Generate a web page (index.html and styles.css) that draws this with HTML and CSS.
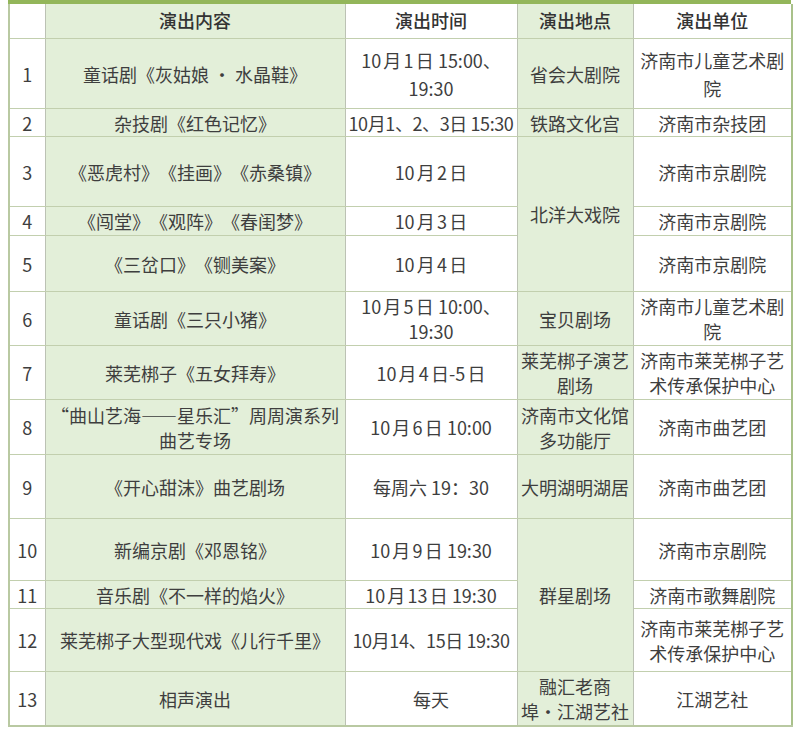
FILE: index.html
```html
<!DOCTYPE html>
<html lang="zh-CN">
<head>
<meta charset="utf-8">
<title>演出安排</title>
<link rel="stylesheet" href="styles.css">
</head>
<body>
<div class="sheet">
  <div class="band"></div>
  <table class="schedule">
    <colgroup>
      <col class="c-no">
      <col class="c-content">
      <col class="c-time">
      <col class="c-venue">
      <col class="c-unit">
    </colgroup>
    <thead>
      <tr class="h-head">
        <th class="no"></th>
        <th class="green">演出内容</th>
        <th>演出时间</th>
        <th class="green">演出地点</th>
        <th>演出单位</th>
      </tr>
    </thead>
    <tbody>
      <tr class="h70">
        <td class="no">1</td>
        <td class="green">童话剧《灰姑娘 · 水晶鞋》</td>
        <td class="two">10月1日 15:00、<br>19:30</td>
        <td class="green">省会大剧院</td>
        <td class="two">济南市儿童艺术剧<br>院</td>
      </tr>
      <tr class="h28">
        <td class="no">2</td>
        <td class="green">杂技剧《红色记忆》</td>
        <td class="tight">10月1、2、3日 15:30</td>
        <td class="green">铁路文化宫</td>
        <td>济南市杂技团</td>
      </tr>
      <tr class="h70">
        <td class="no">3</td>
        <td class="green">《恶虎村》《挂画》《赤桑镇》</td>
        <td>10月2日</td>
        <td class="green" rowspan="3">北洋大戏院</td>
        <td>济南市京剧院</td>
      </tr>
      <tr class="h29">
        <td class="no">4</td>
        <td class="green">《闯堂》《观阵》《春闺梦》</td>
        <td>10月3日</td>
        <td>济南市京剧院</td>
      </tr>
      <tr class="h56">
        <td class="no">5</td>
        <td class="green">《三岔口》《铡美案》</td>
        <td>10月4日</td>
        <td>济南市京剧院</td>
      </tr>
      <tr class="h54">
        <td class="no">6</td>
        <td class="green">童话剧《三只小猪》</td>
        <td>10月5日 10:00、<br>19:30</td>
        <td class="green">宝贝剧场</td>
        <td>济南市儿童艺术剧<br>院</td>
      </tr>
      <tr class="h54">
        <td class="no">7</td>
        <td class="green">莱芜梆子《五女拜寿》</td>
        <td>10月4日-5日</td>
        <td class="green">莱芜梆子演艺<br>剧场</td>
        <td>济南市莱芜梆子艺<br>术传承保护中心</td>
      </tr>
      <tr class="h55">
        <td class="no">8</td>
        <td class="green">“曲山艺海——星乐汇”周周演系列<br>曲艺专场</td>
        <td>10月6日 10:00</td>
        <td class="green">济南市文化馆<br>多功能厅</td>
        <td>济南市曲艺团</td>
      </tr>
      <tr class="h64">
        <td class="no">9</td>
        <td class="green">《开心甜沫》曲艺剧场</td>
        <td>每周六 19：30</td>
        <td class="green">大明湖明湖居</td>
        <td>济南市曲艺团</td>
      </tr>
      <tr class="h62">
        <td class="no">10</td>
        <td class="green">新编京剧《邓恩铭》</td>
        <td>10月9日 19:30</td>
        <td class="green" rowspan="3">群星剧场</td>
        <td>济南市京剧院</td>
      </tr>
      <tr class="h28">
        <td class="no">11</td>
        <td class="green">音乐剧《不一样的焰火》</td>
        <td>10月13日 19:30</td>
        <td>济南市歌舞剧院</td>
      </tr>
      <tr class="h63">
        <td class="no">12</td>
        <td class="green">莱芜梆子大型现代戏《儿行千里》</td>
        <td class="tight">10月14、15日 19:30</td>
        <td>济南市莱芜梆子艺<br>术传承保护中心</td>
      </tr>
      <tr class="h55">
        <td class="no">13</td>
        <td class="green">相声演出</td>
        <td>每天</td>
        <td class="green">融汇老商<br>埠·江湖艺社</td>
        <td>江湖艺社</td>
      </tr>
    </tbody>
  </table>
</div>
</body>
</html>
```

FILE: styles.css
```css
html, body {
  margin: 0;
  padding: 0;
  background: #ffffff;
}

body {
  font-family: "Noto Sans CJK SC", "Noto Sans", sans-serif;
  color: #3e3e3e;
  text-spacing-trim: space-all;
  text-autospace: normal;
}

.sheet {
  padding-left: 8px;
  width: 783px;
}

.band {
  height: 4px;
  background: #93b65a;
}

.schedule {
  width: 783px;
  border-collapse: collapse;
  table-layout: fixed;
  border-bottom: 2px solid #b9c9a2;
  border-left: 2px solid #b9c9a2;
  border-right: 2px solid #a9c18a;
}

.c-no { width: 36px; }
.c-content { width: 300px; }
.c-time { width: 172px; }
.c-venue { width: 116px; }
.c-unit { width: 159px; }

.schedule th,
.schedule td {
  border: 1px solid #c2cfae;
  border-left-color: #bcc2b4;
  border-right-color: #bcc2b4;
  padding: 2px 1px 0;
  text-align: center;
  vertical-align: middle;
  font-size: 18px;
  line-height: 25px;
  white-space: nowrap;
  overflow: hidden;
}

.schedule th {
  font-weight: 500;
  color: #333333;
  border-top: none;
  padding-top: 0;
}

.schedule .two {
  line-height: 28px;
}

.schedule .green {
  background: #e3efd9;
}

.schedule .tight {
  letter-spacing: -0.4px;
  text-autospace: no-autospace;
}

.h-head { height: 34px; }
.h70 { height: 70px; }
.h64 { height: 64px; }
.h63 { height: 63px; }
.h62 { height: 62px; }
.h56 { height: 56px; }
.h55 { height: 55px; }
.h54 { height: 54px; }
.h29 { height: 29px; }
.h28 { height: 28px; }
```
